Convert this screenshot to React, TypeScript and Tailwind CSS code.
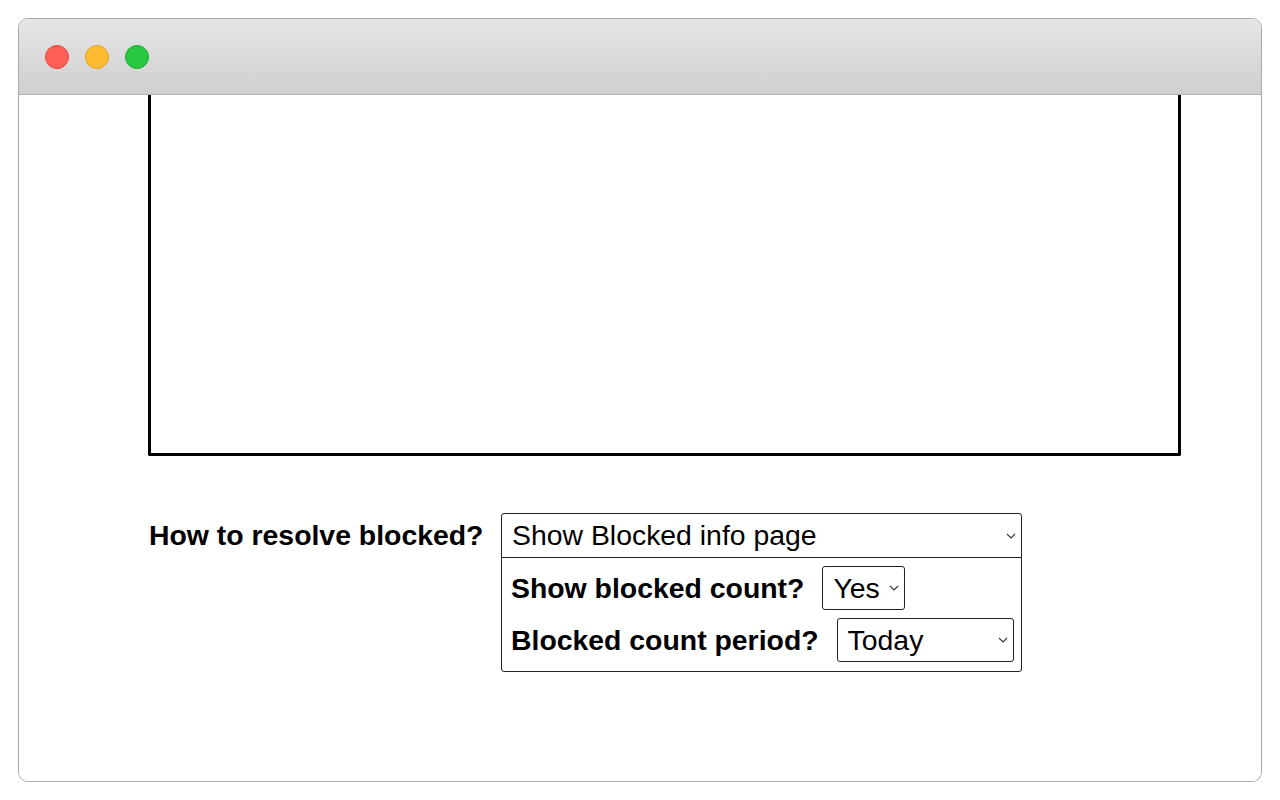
import React from 'react';

function Chevron({ className = '' }: { className?: string }) {
    return (
        <svg className={className} width="10" height="6" viewBox="0 0 10 6" fill="none">
            <path d="M1 1l4 4 4-4" stroke="#333" strokeWidth="1.1" />
        </svg>
    );
}

function FakeSelect({ value, width }: { value: string; width: string }) {
    return (
        <div className={`flex items-center justify-between h-[44px] border border-[#222] rounded-[3px] pl-[10px] pr-[5px] ${width}`}>
            <span className="text-[28.4px] leading-none">{value}</span>
            <Chevron />
        </div>
    );
}

export default function App() {
    return (
        <div className="w-[1280px] h-[800px] bg-white pt-[18px] px-[18px] font-['Liberation_Sans',Arial,sans-serif] text-black">
            <div className="h-[764px] border border-[#a9a9a9] rounded-[10px] overflow-hidden flex flex-col">
                <div className="h-[76px] shrink-0 bg-gradient-to-b from-[#e6e6e6] to-[#cfcfcf] border-b border-[#b4b4b4] flex items-center gap-[16px] pl-[26px]">
                    <span className="w-[24px] h-[24px] rounded-full bg-[#fe5f57] border border-[#e2463f]" />
                    <span className="w-[24px] h-[24px] rounded-full bg-[#febc2e] border border-[#e0a123]" />
                    <span className="w-[24px] h-[24px] rounded-full bg-[#28c840] border border-[#1eab33]" />
                </div>

                <div className="flex-1 bg-white pl-[129px]">
                    <div className="w-[1033px] h-[361px] border-[3px] border-t-0 border-black rounded-b-[2px]" />

                    <div className="flex items-start mt-[57px]">
                        <div className="w-[353px] h-[44px] flex items-center text-[28.4px] leading-none font-bold pl-[1px] pt-[1px]">
                            How to resolve blocked?
                        </div>
                        <div className="w-[521px] border border-[#222] rounded-[3px] flex flex-col">
                            <div className="h-[44px] flex items-center justify-between pl-[10px] pr-[5px] border-b border-[#222]">
                                <span className="text-[28.4px] leading-none">Show Blocked info page</span>
                                <Chevron />
                            </div>
                            <div className="flex flex-col gap-[8px] pt-[8px] pb-[9px] pl-[9px]">
                                <div className="flex items-center gap-[18px]">
                                    <span className="text-[28.4px] leading-none font-bold">Show blocked count?</span>
                                    <FakeSelect value="Yes" width="w-[83px]" />
                                </div>
                                <div className="flex items-center gap-[18px]">
                                    <span className="text-[28.4px] leading-none font-bold">Blocked count period?</span>
                                    <FakeSelect value="Today" width="w-[177px]" />
                                </div>
                            </div>
                        </div>
                    </div>
                </div>
            </div>
        </div>
    );
}
